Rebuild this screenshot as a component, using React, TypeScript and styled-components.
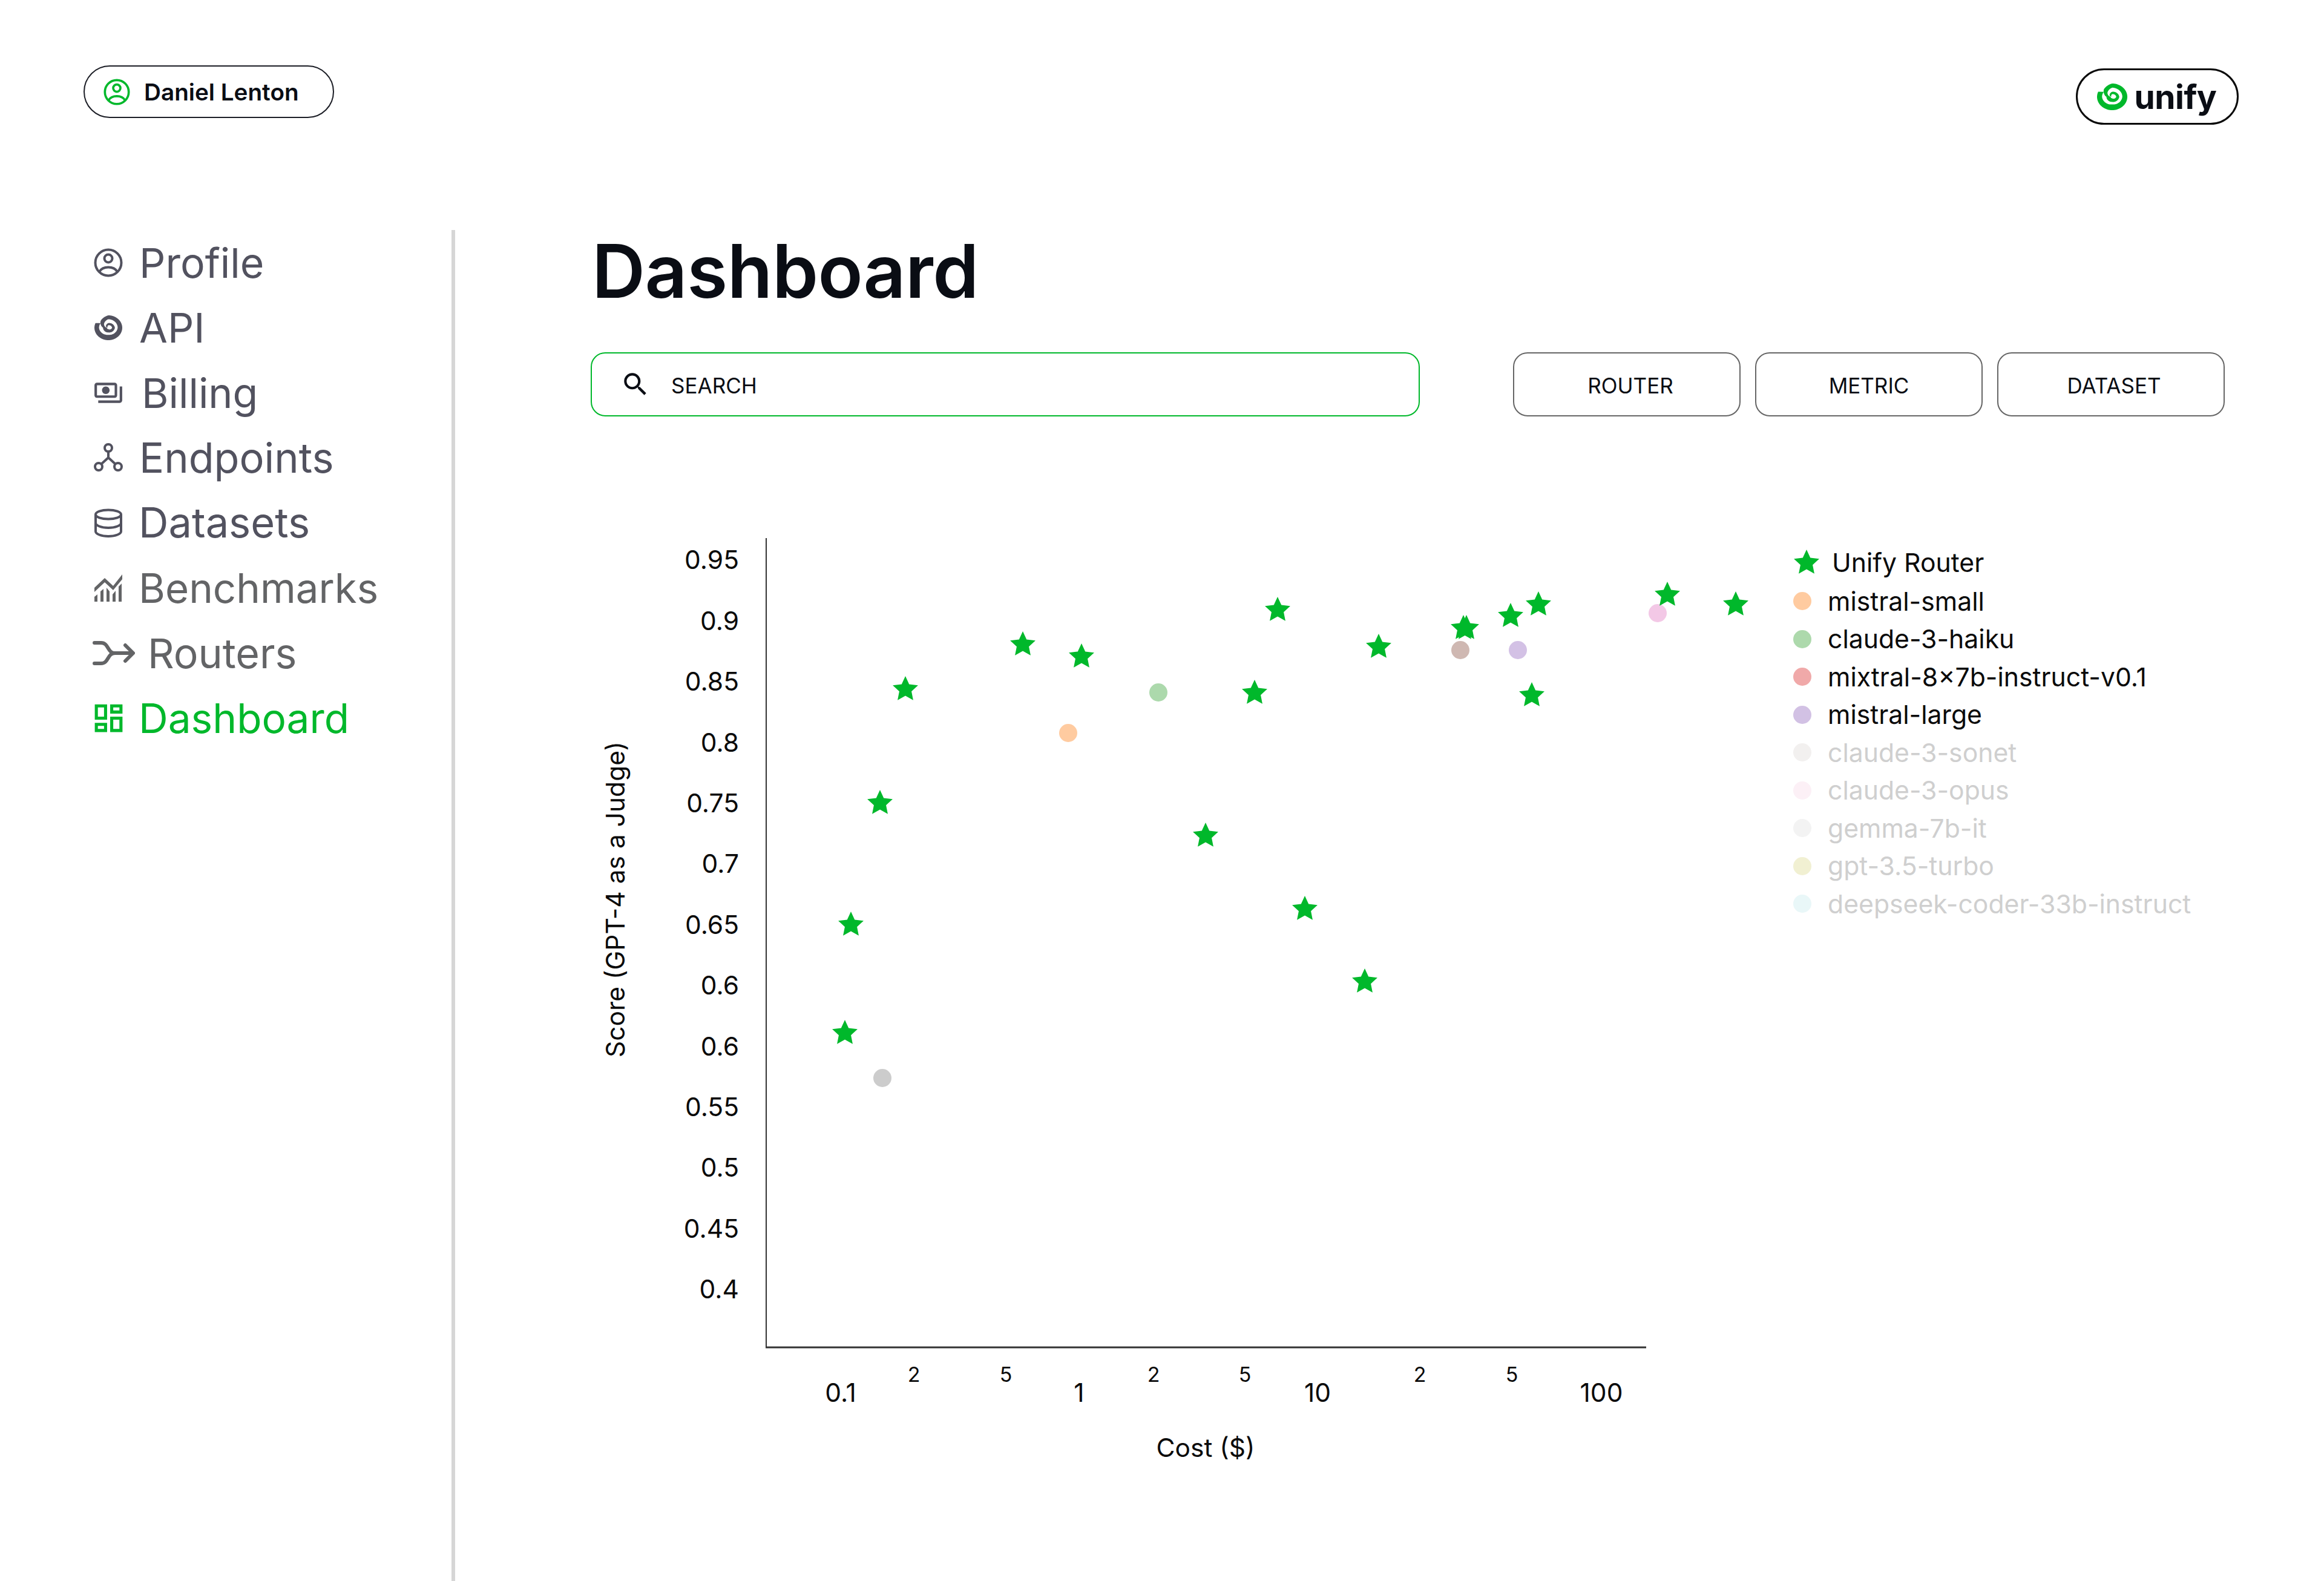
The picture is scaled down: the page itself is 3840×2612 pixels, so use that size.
import React from "react";
import styled, { createGlobalStyle } from "styled-components";
import { MdOutlineDashboard, MdOutlinePayments, MdSearch } from "react-icons/md";

const GREEN = "#00b82b";
const INK = "#0a0d14";

const GlobalStyle = createGlobalStyle`
  html, body {
    margin: 0;
    padding: 0;
    background: #fff;
  }
  body {
    font-family: Inter, "Liberation Sans", sans-serif;
    color: ${INK};
  }
`;

const Page = styled.div`
  width: 3840px;
  height: 2612px;
  overflow: hidden;
  display: flex;
  flex-direction: column;
`;

const Header = styled.header`
  height: 380px;
  box-sizing: border-box;
  padding: 108px 141px 0 138px;
  display: flex;
  justify-content: space-between;
  align-items: flex-start;
`;

const UserPill = styled.div`
  width: 414px;
  height: 87px;
  box-sizing: border-box;
  border: 2.5px solid #1c1e26;
  border-radius: 44px;
  display: flex;
  align-items: center;
  gap: 23px;
  padding-left: 31px;
  font-size: 38.7px;
  font-weight: 600;
`;

const LogoPill = styled.div`
  width: 269px;
  height: 93px;
  margin-top: 5px;
  box-sizing: border-box;
  border: 3px solid #0a0a0a;
  border-radius: 47px;
  display: flex;
  align-items: center;
  justify-content: center;
  gap: 12px;
  padding-right: 2px;
  font-size: 55px;
  font-weight: 700;
  letter-spacing: -0.5px;
`;

const GreenMark = styled.span`
  color: ${GREEN};
  display: flex;
`;

const Body = styled.div`
  flex: 1;
  display: flex;
  min-height: 0;
`;

const Sidebar = styled.nav`
  width: 752px;
  box-sizing: border-box;
  border-right: 6px solid #d6d6d6;
  padding-left: 153px;
  flex-shrink: 0;
`;

const NavItem = styled.div<{ $active?: boolean; $dark?: boolean; $gap: number; $size?: number }>`
  height: 107.5px;
  display: flex;
  align-items: center;
  gap: ${({ $gap }) => $gap}px;
  font-size: ${({ $size }) => $size ?? 68}px;
  color: ${({ $active, $dark }) => ($active ? GREEN : $dark ? "#52525f" : "#636466")};
`;

const NavIcon = styled.span<{ $width?: number }>`
  width: ${({ $width }) => $width ?? 52}px;
  height: 52px;
  display: flex;
  align-items: center;
  justify-content: center;
  flex-shrink: 0;
  color: inherit;

  svg {
    flex-shrink: 0;
  }
`;

const Main = styled.main`
  flex: 1;
  padding-left: 224px;
`;

const Title = styled.h1`
  margin: 0;
  padding-left: 2px;
  height: 202px;
  font-size: 122px;
  line-height: 136px;
  font-weight: 600;
  letter-spacing: -0.5px;
  color: ${INK};
`;

const Controls = styled.div`
  display: flex;
  height: 106px;
`;

const SearchBox = styled.div`
  width: 1370px;
  box-sizing: border-box;
  border: 2.5px solid ${GREEN};
  border-radius: 24px;
  display: flex;
  align-items: center;
  padding-left: 47px;
  gap: 34px;
  font-size: 35px;
  margin-right: 154px;
`;

const SearchLabel = styled.span`
  padding-top: 4px;
`;

const FilterButton = styled.button<{ $shift?: number }>`
  width: 376px;
  height: 106px;
  margin-right: 24px;
  box-sizing: border-box;
  background: #fff;
  border: 2.5px solid #666;
  border-radius: 24px;
  font-family: inherit;
  font-size: 35px;
  color: ${INK};
  padding: 4px 0 0 ${({ $shift }) => $shift ?? 0}px;
`;

const ChartRow = styled.div`
  display: flex;
  margin-top: 192px;
`;

const AxisText = styled.text<{ $size?: number }>`
  font-family: Inter, "Liberation Sans", sans-serif;
  font-size: ${({ $size }) => $size ?? 42.5}px;
  fill: #0a0a0a;
  dominant-baseline: central;
`;

const Legend = styled.ul`
  list-style: none;
  margin: 17px 0 0 33px;
  padding: 0;
`;

const LegendRow = styled.li<{ $faded?: boolean; $gap: number }>`
  height: 62.5px;
  display: flex;
  align-items: center;
  gap: ${({ $gap }) => $gap}px;
  font-size: 42.7px;
  white-space: nowrap;
  color: ${({ $faded }) => ($faded ? "#cfcfcf" : "#0a0a0a")};

  &:first-child {
    height: 65px;
  }
`;

const Dot = styled.span<{ $color: string }>`
  width: 30px;
  height: 30px;
  border-radius: 50%;
  flex-shrink: 0;
  background: ${({ $color }) => $color};
`;

// radii per quarter turn, outer then inner, walking in from the left end of the spiral
const SPIRAL_RADII: [number, number, number][] = [
  [-0.4, 1, 0.67],
  [0, 1, 0.67],
  [1, 1, 0.57],
  [2, 1, 0.67],
  [3, 1, 0.69],
  [3.5, 0.78, 0.44],
  [4, 0.38, 0.1],
  [5, 0.38, 0.11],
  [6, 0.47, 0.27],
  [7, 0.38, 0.2],
  [7.8, 0.15, 0.02],
];

const radiiAt = (q: number) => {
  let i = 0;
  while (i < SPIRAL_RADII.length - 2 && q > SPIRAL_RADII[i + 1][0]) i++;
  const [q0, o0, n0] = SPIRAL_RADII[i];
  const [q1, o1, n1] = SPIRAL_RADII[i + 1];
  const k = (q - q0) / (q1 - q0);
  return [o0 + (o1 - o0) * k, n0 + (n1 - n0) * k];
};

const spiralEdge = (from: number, to: number, pick: 0 | 1) => {
  const points: string[] = [];
  for (let q = from; q <= to; q += 0.05) {
    const r = radiiAt(q)[pick];
    const a = (q * Math.PI) / 2;
    points.push(`${(50 - 50 * r * Math.cos(a)).toFixed(2)},${(50 + 50 * r * Math.sin(a)).toFixed(2)}`);
  }
  return points;
};

// the two edges start at different angles so the open end is cut flat
const SPIRAL_POINTS = [...spiralEdge(-0.25, 7.8, 0), ...spiralEdge(-0.384, 7.8, 1).reverse()].join(" ");

const Spiral = ({ width, height }: { width: number; height: number }) => (
  <svg width={width} height={height} viewBox="0 0 100 100" preserveAspectRatio="none">
    <polygon points={SPIRAL_POINTS} fill="currentColor" />
  </svg>
);

const ProfileIcon = ({ size }: { size: number }) => (
  <svg width={size} height={size} viewBox="0 0 48 48" fill="none" stroke="currentColor" strokeWidth="4">
    <circle cx="24" cy="24" r="21.5" />
    <circle cx="24" cy="17" r="6.5" />
    <path d="M9 39C15 29 33 29 39 39" />
  </svg>
);

const EndpointsIcon = () => (
  <svg width="48" height="48" viewBox="0 0 48 48" fill="none" stroke="currentColor" strokeWidth="4">
    <circle cx="24" cy="8" r="6" />
    <circle cx="8" cy="39" r="6" />
    <circle cx="40" cy="39" r="6" />
    <path d="M24 14V24L12 35M24 24L36 35" />
  </svg>
);

const DatasetsIcon = () => (
  <svg width="48" height="48" viewBox="0 0 48 48" fill="none" stroke="currentColor" strokeWidth="4">
    <ellipse cx="24" cy="10" rx="21" ry="7.5" />
    <path d="M3 10V38C3 42 12 46 24 46S45 42 45 38V10" />
    <path d="M3 24C3 28 12 32 24 32S45 28 45 24" />
  </svg>
);

const BenchmarksIcon = () => (
  <svg width="48" height="48" viewBox="0 0 48 48" fill="currentColor">
    <path d="M1 24L18 8L32 21L47 2V10L32 28L18 15L1 31Z" />
    <path d="M1 47V39L6 35V47ZM11 47V30L16 26V47ZM21 47V24L26 30V47ZM31 47V35L36 29V47ZM41 47V22L46 17V47Z" />
  </svg>
);

const RoutersIcon = () => (
  <svg width="70" height="42" viewBox="0 0 70 42" fill="none" stroke="currentColor" strokeWidth="6" strokeLinecap="round" strokeLinejoin="round">
    <path d="M3 4H14C27 4 24 21 37 21H66M3 38H14C27 38 24 21 37 21" />
    <path d="M54 8L67 21L54 34" />
  </svg>
);

const STAR_POINTS = [0, 1, 2, 3, 4, 5, 6, 7, 8, 9]
  .map((i) => {
    const r = i % 2 === 0 ? 1 : 0.48;
    const a = (-90 + i * 36) * (Math.PI / 180);
    return `${(r * Math.cos(a)).toFixed(3)},${(r * Math.sin(a)).toFixed(3)}`;
  })
  .join(" ");

// chart data is in page pixels, the svg viewBox starts at the chart's page offset
const stars: [number, number][] = [
  [1496, 1139], [1690, 1065], [1787, 1085], [2111, 1008], [2073, 1145], [2278, 1069],
  [2418, 1038], [2423, 1038], [2496, 1018], [2542, 999], [2531, 1149], [2755, 983], [2868, 999],
  [1454, 1327], [1406, 1528], [1396, 1707], [1992, 1381], [2156, 1502], [2255, 1622],
];

const dots: [number, number, string][] = [
  [1765, 1211, "#ffcba0"],
  [1914, 1144, "#acd9ac"],
  [2413, 1074, "#cfb8b2"],
  [2508, 1074, "#d3c1e5"],
  [2739, 1013, "#f3c8e6"],
  [1458, 1781, "#cccccc"],
];

const yTicks: [string, number][] = [
  ["0.95", 924], ["0.9", 1025], ["0.85", 1125], ["0.8", 1226], ["0.75", 1326], ["0.7", 1426],
  ["0.65", 1527], ["0.6", 1627], ["0.6", 1728], ["0.55", 1828], ["0.5", 1928], ["0.45", 2029], ["0.4", 2129],
];

const xMajor: [string, number][] = [["0.1", 1389], ["1", 1783], ["10", 2177], ["100", 2646]];
const xMinor: [string, number][] = [["2", 1510], ["5", 1662], ["2", 1906], ["5", 2057], ["2", 2346], ["5", 2498]];

const legend = [
  { name: "mistral-small", color: "#ffcba0" },
  { name: "claude-3-haiku", color: "#add9ac" },
  { name: "mixtral-8×7b-instruct-v0.1", color: "#f0a9a9" },
  { name: "mistral-large", color: "#d2c1e4" },
  { name: "claude-3-sonet", color: "#f2f0ef", faded: true },
  { name: "claude-3-opus", color: "#fcf0f6", faded: true },
  { name: "gemma-7b-it", color: "#f3f3f3", faded: true },
  { name: "gpt-3.5-turbo", color: "#f1f0d2", faded: true },
  { name: "deepseek-coder-33b-instruct", color: "#e9f7f8", faded: true },
];

const Chart = () => (
  <svg width="1954" height="1560" viewBox="976 880 1954 1560">
    <path d="M1266 889V2226" stroke="#333" strokeWidth="2" fill="none" />
    <path d="M1265 2226H2720" stroke="#333" strokeWidth="3" fill="none" />
    {yTicks.map(([label, y], i) => (
      <AxisText key={i} x={1221} y={y} textAnchor="end">
        {label}
      </AxisText>
    ))}
    {xMajor.map(([label, x]) => (
      <AxisText key={x} x={x} y={2300} textAnchor="middle">
        {label}
      </AxisText>
    ))}
    {xMinor.map(([label, x]) => (
      <AxisText key={x} x={x} y={2270} textAnchor="middle" $size={34}>
        {label}
      </AxisText>
    ))}
    <AxisText x={1992} y={2391} textAnchor="middle">
      Cost ($)
    </AxisText>
    <AxisText x={1016} y={1486} textAnchor="middle" transform="rotate(-90 1016 1486)">
      Score (GPT-4 as a Judge)
    </AxisText>
    {dots.map(([x, y, color]) => (
      <circle key={x} cx={x} cy={y} r={15} fill={color} />
    ))}
    {stars.map(([x, y]) => (
      <polygon key={`${x}-${y}`} points={STAR_POINTS} transform={`translate(${x} ${y}) scale(22)`} fill={GREEN} />
    ))}
  </svg>
);

const navItems = [
  { label: "Profile", gap: 25, dark: true, icon: <ProfileIcon size={48} /> },
  { label: "API", gap: 25, dark: true, icon: <Spiral width={46} height={41} /> },
  { label: "Billing", gap: 29, dark: true, icon: <MdOutlinePayments size={50} /> },
  { label: "Endpoints", gap: 25, dark: true, size: 68.5, icon: <EndpointsIcon /> },
  { label: "Datasets", gap: 24, dark: true, size: 68.5, icon: <DatasetsIcon /> },
  { label: "Benchmarks", gap: 24, size: 67.2, icon: <BenchmarksIcon /> },
  { label: "Routers", gap: 21, iconWidth: 70, icon: <RoutersIcon /> },
  { label: "Dashboard", gap: 24, active: true, size: 67.5, icon: <MdOutlineDashboard size={61} /> },
];

export default function App() {
  return (
    <Page>
      <GlobalStyle />
      <Header>
        <UserPill>
          <GreenMark>
            <ProfileIcon size={44} />
          </GreenMark>
          Daniel Lenton
        </UserPill>
        <LogoPill>
          <GreenMark>
            <Spiral width={50} height={44} />
          </GreenMark>
          unify
        </LogoPill>
      </Header>
      <Body>
        <Sidebar>
          {navItems.map((item) => (
            <NavItem key={item.label} $active={item.active} $dark={item.dark} $gap={item.gap} $size={item.size}>
              <NavIcon $width={item.iconWidth}>{item.icon}</NavIcon>
              {item.label}
            </NavItem>
          ))}
        </Sidebar>
        <Main>
          <Title>Dashboard</Title>
          <Controls>
            <SearchBox>
              <MdSearch size={50} />
              <SearchLabel>SEARCH</SearchLabel>
            </SearchBox>
            <FilterButton $shift={12}>ROUTER</FilterButton>
            <FilterButton>METRIC</FilterButton>
            <FilterButton $shift={10}>DATASET</FilterButton>
          </Controls>
          <ChartRow>
            <Chart />
            <Legend>
              <LegendRow $gap={20}>
                <svg width="44" height="44" viewBox="-1 -1 2 2">
                  <polygon points={STAR_POINTS} fill={GREEN} />
                </svg>
                Unify Router
              </LegendRow>
              {legend.map((row) => (
                <LegendRow key={row.name} $faded={row.faded} $gap={27}>
                  <Dot $color={row.color} />
                  {row.name}
                </LegendRow>
              ))}
            </Legend>
          </ChartRow>
        </Main>
      </Body>
    </Page>
  );
}
